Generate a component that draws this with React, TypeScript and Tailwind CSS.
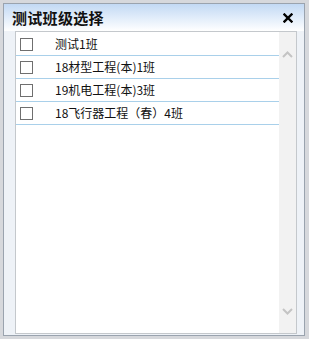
import React from 'react';

const classes = ['测试1班', '18材型工程(本)1班', '19机电工程(本)3班', '18飞行器工程（春）4班'];

export default function App() {
  return (
    <div className="w-[309px] h-[339px] bg-[#d6d8dc] pt-[3px] pl-[3px] overflow-hidden" style={{ fontFamily: '"Noto Sans CJK SC", "Liberation Sans", sans-serif' }}>
      <div className="w-[302px] h-[333px] border border-[#9aa3ae] bg-[#eef2f7] flex flex-col">
        <div className="h-[27px] shrink-0 flex items-center justify-between pl-[8px] pr-[11px] bg-gradient-to-b from-[#c2d9f4] to-[#ffffff]">
          <span className="text-[15px] font-bold text-[#111] leading-none tracking-[0.3px]">测试班级选择</span>
          <svg width="10" height="10" viewBox="0 0 10 10" className="mt-[1px]">
            <path d="M1.5 1.5 L8.5 8.5 M8.5 1.5 L1.5 8.5" stroke="#000" strokeWidth="2.4" strokeLinecap="square" />
          </svg>
        </div>
        <div className="flex-1 flex pl-[11px] pr-[7px] pb-[1px]">
          <div className="flex-1 flex border border-[#c4c8cc] bg-white">
            <div className="flex-1 flex flex-col">
              {classes.map((c, i) => (
                <div key={c} className={`flex items-center h-[23px] border-b border-[#a9d0ea] ${i === 0 ? 'mt-[1px]' : ''}`}>
                  <div className="w-[13px] h-[13px] border border-[#6f6f6f] bg-white ml-[4px]" />
                  <span className="ml-[22px] text-[12px] text-[#111] leading-none">{c}</span>
                </div>
              ))}
            </div>
            <div className="w-[17px] bg-[#f2f2f2] flex flex-col items-center justify-between pt-[19px] pb-[18px]">
              <svg width="11" height="7" viewBox="0 0 11 7">
                <path d="M1 6 L5.5 1.5 L10 6" stroke="#c4c4c4" strokeWidth="2" fill="none" />
              </svg>
              <svg width="11" height="7" viewBox="0 0 11 7">
                <path d="M1 1 L5.5 5.5 L10 1" stroke="#c4c4c4" strokeWidth="2" fill="none" />
              </svg>
            </div>
          </div>
        </div>
      </div>
    </div>
  );
}
